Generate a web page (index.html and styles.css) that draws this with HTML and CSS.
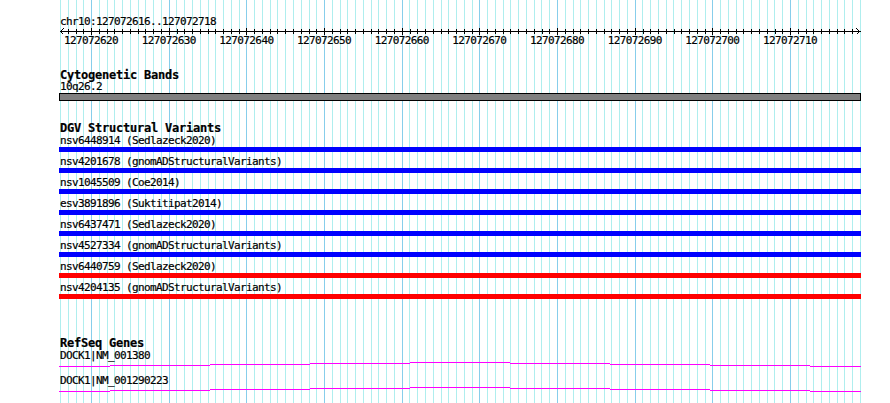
FILE: index.html
```html
<!DOCTYPE html>
<html>
<head>
<meta charset="utf-8">
<title>Genome browser</title>
<link rel="stylesheet" href="styles.css">
</head>
<body>
<div class="page">
  <div class="grid">
    <i></i><i></i><i></i><i></i><i></i><i></i><i></i><i></i><i></i><i></i>
    <i></i><i></i><i></i><i></i><i></i><i></i><i></i><i></i><i></i><i></i>
    <i></i><i></i><i></i><i></i><i></i><i></i><i></i><i></i><i></i><i></i>
    <i></i><i></i><i></i><i></i><i></i><i></i><i></i><i></i><i></i><i></i>
    <i></i><i></i><i></i><i></i><i></i><i></i><i></i><i></i><i></i><i></i>
    <i></i><i></i><i></i><i></i><i></i><i></i><i></i><i></i><i></i><i></i>
    <i></i><i></i><i></i><i></i><i></i><i></i><i></i><i></i><i></i><i></i>
    <i></i><i></i><i></i><i></i><i></i><i></i><i></i><i></i><i></i><i></i>
    <i></i><i></i><i></i><i></i><i></i><i></i><i></i><i></i><i></i><i></i>
    <i></i><i></i><i></i><i></i><i></i><i></i><i></i><i></i><i></i><i></i>
    <i></i><i></i><i></i>
  </div>
  <div class="content">
    <div class="pos">chr10:127072616..127072718</div>
    <svg class="ruler" width="890" height="9" viewBox="0 0 890 9">
      <path d="M60 5.5H861" />
      <path d="M60.5 5.5L63.5 2.5M60.5 5.5L63.5 8.5M859.5 5.5L856.5 2.5M859.5 5.5L856.5 8.5" />
      <path d="M68.5 3v5M76.5 3v5M83.5 3v5M99.5 3v5M107.5 3v5M114.5 3v5M122.5 3v5M130.5 3v5M138.5 3v5M145.5 3v5M153.5 3v5M161.5 3v5M177.5 3v5M184.5 3v5M192.5 3v5M200.5 3v5M208.5 3v5M215.5 3v5M223.5 3v5M231.5 3v5M239.5 3v5M254.5 3v5M262.5 3v5M270.5 3v5M277.5 3v5M285.5 3v5M293.5 3v5M301.5 3v5M309.5 3v5M316.5 3v5M332.5 3v5M340.5 3v5M347.5 3v5M355.5 3v5M363.5 3v5M371.5 3v5M378.5 3v5M386.5 3v5M394.5 3v5M410.5 3v5M417.5 3v5M425.5 3v5M433.5 3v5M441.5 3v5M448.5 3v5M456.5 3v5M464.5 3v5M472.5 3v5M487.5 3v5M495.5 3v5M503.5 3v5M510.5 3v5M518.5 3v5M526.5 3v5M534.5 3v5M542.5 3v5M549.5 3v5M565.5 3v5M573.5 3v5M580.5 3v5M588.5 3v5M596.5 3v5M604.5 3v5M611.5 3v5M619.5 3v5M627.5 3v5M643.5 3v5M650.5 3v5M658.5 3v5M666.5 3v5M674.5 3v5M681.5 3v5M689.5 3v5M697.5 3v5M705.5 3v5M720.5 3v5M728.5 3v5M736.5 3v5M743.5 3v5M751.5 3v5M759.5 3v5M767.5 3v5M775.5 3v5M782.5 3v5M798.5 3v5M806.5 3v5M813.5 3v5M821.5 3v5M829.5 3v5M837.5 3v5M844.5 3v5M852.5 3v5" />
      <path d="M91.5 2v7M169.5 2v7M246.5 2v7M324.5 2v7M402.5 2v7M479.5 2v7M557.5 2v7M635.5 2v7M712.5 2v7M790.5 2v7" />
    </svg>
    <div class="scale">
      <span>127072620</span><span>127072630</span><span>127072640</span><span>127072650</span><span>127072660</span><span>127072670</span><span>127072680</span><span>127072690</span><span>127072700</span><span>127072710</span>
    </div>

    <section class="track cyto">
      <h2 class="track-title">Cytogenetic Bands</h2>
      <div class="band-label">10q26.2</div>
      <div class="band"></div>
    </section>

    <section class="track dgv">
      <h2 class="track-title">DGV Structural Variants</h2>
      <div class="feat"><div class="feat-label">nsv6448914 (Sedlazeck2020)</div><div class="bar loss"></div></div>
      <div class="feat"><div class="feat-label">nsv4201678 (gnomADStructuralVariants)</div><div class="bar loss"></div></div>
      <div class="feat"><div class="feat-label">nsv1045509 (Coe2014)</div><div class="bar loss"></div></div>
      <div class="feat"><div class="feat-label">esv3891896 (Suktitipat2014)</div><div class="bar loss"></div></div>
      <div class="feat"><div class="feat-label">nsv6437471 (Sedlazeck2020)</div><div class="bar loss"></div></div>
      <div class="feat"><div class="feat-label">nsv4527334 (gnomADStructuralVariants)</div><div class="bar loss"></div></div>
      <div class="feat"><div class="feat-label">nsv6440759 (Sedlazeck2020)</div><div class="bar gain"></div></div>
      <div class="feat"><div class="feat-label">nsv4204135 (gnomADStructuralVariants)</div><div class="bar gain"></div></div>
    </section>

    <section class="track refseq">
      <h2 class="track-title">RefSeq Genes</h2>
      <div class="gene">
        <div class="gene-label">DOCK1|NM_001380</div>
        <svg class="intron" width="800" height="13" viewBox="0 0 800 13">
          <path d="M-1 5.5H50M50 4.5H150M150 3.5H250M250 2.5H350M350 1.5H450M450 2.5H550M550 3.5H650M650 4.5H750M750 5.5H801" />
        </svg>
      </div>
      <div class="gene">
        <div class="gene-label">DOCK1|NM_001290223</div>
        <svg class="intron" width="800" height="13" viewBox="0 0 800 13">
          <path d="M-1 5.5H50M50 4.5H150M150 3.5H250M250 2.5H350M350 1.5H450M450 2.5H550M550 3.5H650M650 4.5H750M750 5.5H801" />
        </svg>
      </div>
    </section>
  </div>
</div>
</body>
</html>
```

FILE: styles.css
```css
html, body {
  margin: 0;
  padding: 0;
  background: #ffffff;
}

body {
  font-family: "DejaVu Sans Mono", "Liberation Mono", monospace;
  font-size: 11px;
  letter-spacing: -0.62px;
  color: #000000;
  -webkit-text-stroke: 0.2px #000000;
}

.page {
  display: grid;
  width: 890px;
  height: 403px;
  overflow: hidden;
}

.grid,
.content {
  grid-area: 1 / 1;
}

.grid {
  display: flex;
  margin-left: 60px;
  width: 800px;
  height: 403px;
  border-right: 1px solid #afeeee;
}

.grid i {
  flex: 1 1 0;
  box-sizing: border-box;
  border-left: 1px solid #afeeee;
}

.grid i:nth-child(10n+5) {
  border-left-color: #87ceeb;
}

.content {
  padding-left: 60px;
}

.pos {
  padding-top: 17px;
  line-height: 10px;
  height: 9px;
  white-space: nowrap;
}

.ruler {
  display: block;
  margin-left: -60px;
  overflow: visible;
}

.ruler path {
  fill: none;
  stroke: #000000;
  stroke-width: 1;
  shape-rendering: crispEdges;
}

.scale {
  display: flex;
  margin-left: -7.77px;
  padding-top: 1px;
  line-height: 10px;
  height: 10px;
}

.scale span {
  flex: 0 0 77.67px;
  text-align: center;
  white-space: nowrap;
}

.track-title {
  margin: 0;
  font-size: 12px;
  font-weight: bold;
  letter-spacing: -0.22px;
  line-height: 12px;
  height: 12px;
  white-space: nowrap;
}

.cyto {
  padding-top: 23px;
}

.band-label {
  line-height: 11px;
  height: 10px;
}

.band {
  margin-top: 2px;
  margin-left: -1px;
  width: 802px;
  height: 8px;
  box-sizing: border-box;
  border: 1px solid #000000;
  background: #808080;
}

.dgv {
  padding-top: 21px;
}

.feat-label {
  line-height: 13px;
  height: 13px;
  white-space: nowrap;
}

.bar {
  margin-left: -1px;
  width: 802px;
  height: 5px;
  margin-bottom: 3px;
}

.bar.loss {
  background: #0000ff;
}

.bar.gain {
  background: #ff0000;
}

.refseq {
  padding-top: 35px;
}

.gene-label {
  padding-top: 1px;
  line-height: 11px;
  height: 11px;
  white-space: nowrap;
}

.intron {
  display: block;
  overflow: visible;
}

.intron path {
  fill: none;
  stroke: #ff00ff;
  stroke-width: 1;
  shape-rendering: crispEdges;
}
```
